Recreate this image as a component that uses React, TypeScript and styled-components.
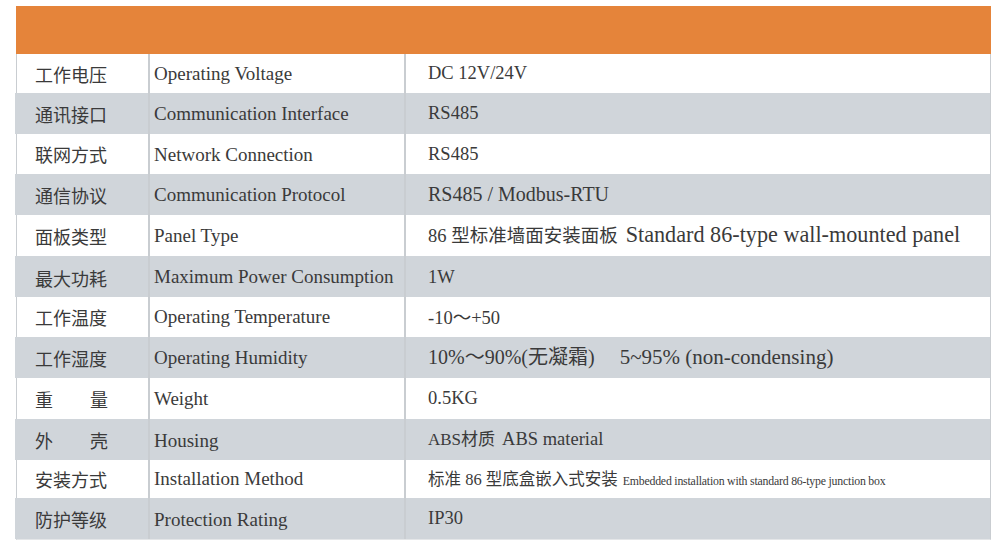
import styled, { createGlobalStyle } from "styled-components";

const GlobalStyle = createGlobalStyle`
  html, body {
    margin: 0;
    padding: 0;
    background: #ffffff;
  }
  body {
    font-family: "Liberation Serif", "Noto Sans CJK SC", serif;
    color: #3a3a3a;
  }
`;

const Page = styled.div`
  width: 994px;
  height: 546px;
  padding: 6px 5px 0 16px;
  box-sizing: border-box;
`;

const Table = styled.div`
  display: flex;
  flex-flow: column;
  width: 973px;
  border-left: 1px solid #c9cdd1;
  border-right: 1px solid #c9cdd1;
  border-bottom: 1px solid #e4e6e8;
`;

const Header = styled.div`
  height: 48px;
  margin-left: -1px;
  margin-right: -1px;
  background: #e5843a;
`;

const Row = styled.div<{ $h: number; $shade: boolean }>`
  display: grid;
  grid-template-columns: 131px 256px 1fr;
  height: ${(p) => p.$h}px;
  background: ${(p) => (p.$shade ? "#d0d5da" : "#ffffff")};
  margin-left: ${(p) => (p.$shade ? "-2px" : "0")};
  padding-left: ${(p) => (p.$shade ? "2px" : "0")};
`;

const Cell = styled.div<{ $pad: number; $shift?: number }>`
  display: flex;
  align-items: center;
  padding-left: ${(p) => p.$pad}px;
  padding-top: ${(p) => (p.$shift ?? 0) * 2}px;
  font-size: 19px;
  white-space: pre;
  overflow: hidden;
  & + & {
    border-left: 2px solid #c9cdd1;
  }
`;

const CnLabel = styled.span<{ $spread: boolean }>`
  display: flex;
  justify-content: ${(p) => (p.$spread ? "space-between" : "flex-start")};
  width: 73px;
  font-size: 18px;
`;

const Value = styled.span`
  display: block;
  line-height: 1.2;
`;

const Seg = styled.span<{ $size?: number; $gap?: number; $ls?: number }>`
  font-size: ${(p) => p.$size ?? 18.5}px;
  margin-left: ${(p) => p.$gap ?? 0}px;
  letter-spacing: ${(p) => p.$ls ?? 0}px;
`;

type Part = { t: string; size?: number; gap?: number; ls?: number };

type Spec = {
  cn: string;
  en: string;
  value: Part[];
  h: number;
  cnShift?: number;
  enShift?: number;
  valShift?: number;
};

const specs: Spec[] = [
  { cn: "工作电压", en: "Operating Voltage", value: [{ t: "DC 12V/24V" }], h: 39 },
  { cn: "通讯接口", en: "Communication Interface", value: [{ t: "RS485" }], h: 41 },
  { cn: "联网方式", en: "Network Connection", value: [{ t: "RS485" }], h: 40, enShift: 1 },
  {
    cn: "通信协议",
    en: "Communication Protocol",
    value: [{ t: "RS485 / Modbus-RTU", size: 20 }],
    h: 41,
  },
  {
    cn: "面板类型",
    en: "Panel Type",
    value: [
      { t: "86 型标准墙面安装面板" },
      { t: "Standard 86-type wall-mounted panel", size: 22.2, gap: 8 },
    ],
    h: 41,
  },
  {
    cn: "最大功耗",
    en: "Maximum Power Consumption",
    value: [{ t: "1W" }],
    h: 41,
    cnShift: 1,
    enShift: -1,
    valShift: 1,
  },
  {
    cn: "工作温度",
    en: "Operating Temperature",
    value: [{ t: "-10～+50" }],
    h: 40,
    valShift: 1,
  },
  {
    cn: "工作湿度",
    en: "Operating Humidity",
    value: [
      { t: "10%～90%(无凝霜)", size: 20 },
      { t: "5~95% (non-condensing)", size: 21, gap: 25 },
    ],
    h: 41,
  },
  { cn: "重量", en: "Weight", value: [{ t: "0.5KG" }], h: 41 },
  {
    cn: "外壳",
    en: "Housing",
    value: [{ t: "ABS材质", size: 17 }, { t: "ABS material", gap: 7 }],
    h: 41,
    cnShift: -1,
    enShift: 1,
    valShift: -1,
  },
  {
    cn: "安装方式",
    en: "Installation Method",
    value: [
      { t: "标准 86 型底盒嵌入式安装", size: 16.5 },
      {
        t: "Embedded installation with standard 86-type junction box",
        size: 11.8,
        gap: 5,
        ls: -0.2,
      },
    ],
    h: 38,
    cnShift: -1,
  },
  { cn: "防护等级", en: "Protection Rating", value: [{ t: "IP30" }], h: 41, enShift: 1 },
];

export default function App() {
  return (
    <>
      <GlobalStyle />
      <Page>
        <Table>
          <Header />
          {specs.map((s, i) => (
            <Row key={s.cn} $h={s.h} $shade={i % 2 === 1}>
              <Cell $pad={18} $shift={s.cnShift}>
                <CnLabel $spread={s.cn.length === 2}>
                  {s.cn.split("").map((c, j) => (
                    <span key={j}>{c}</span>
                  ))}
                </CnLabel>
              </Cell>
              <Cell $pad={4} $shift={s.enShift}>
                {s.en}
              </Cell>
              <Cell $pad={22} $shift={s.valShift}>
                <Value>
                  {s.value.map((p, j) => (
                    <Seg key={j} $size={p.size} $gap={p.gap} $ls={p.ls}>
                      {p.t}
                    </Seg>
                  ))}
                </Value>
              </Cell>
            </Row>
          ))}
        </Table>
      </Page>
    </>
  );
}
